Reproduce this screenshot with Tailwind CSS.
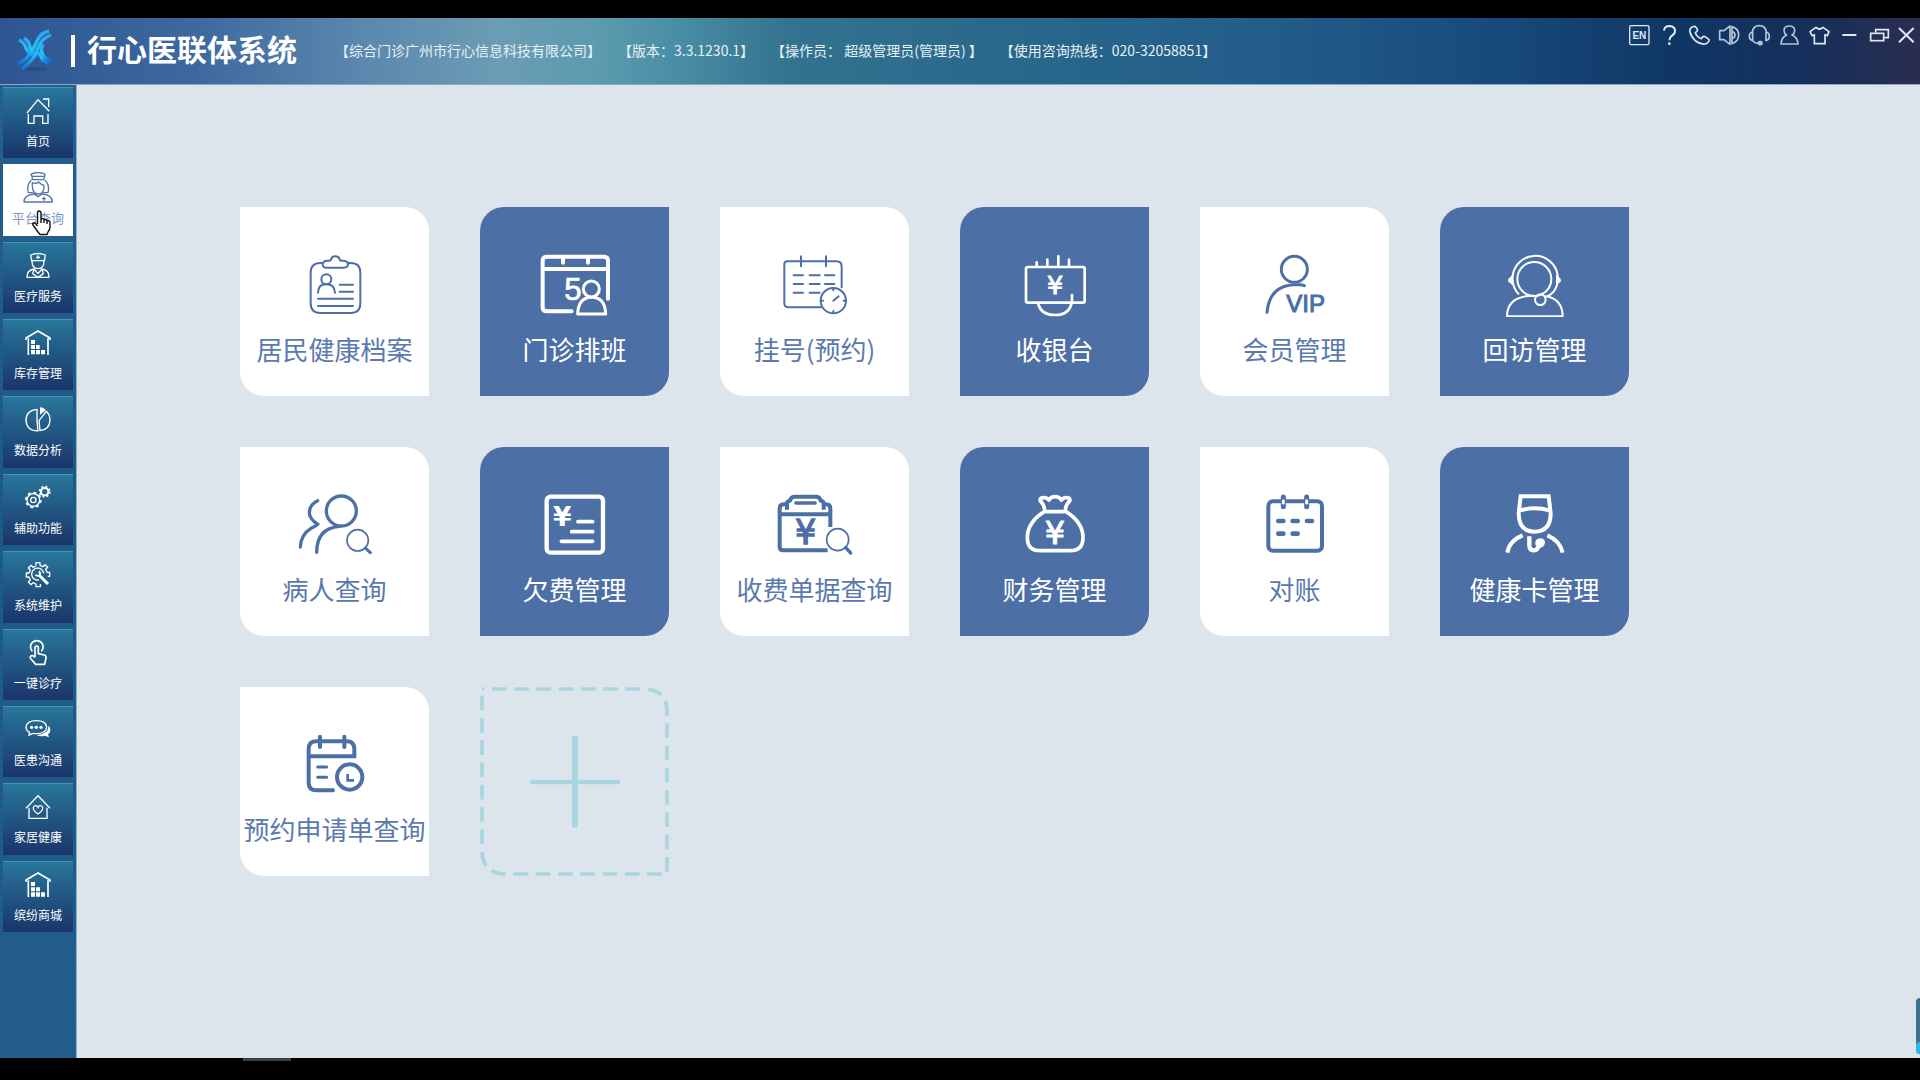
<!DOCTYPE html>
<html lang="zh-CN">
<head>
<meta charset="utf-8">
<meta name="viewport" content="width=device-width, initial-scale=1">
<title>行心医联体系统</title>
<script src="https://cdn.jsdelivr.net/npm/@tailwindcss/browser@4"></script>
</head>
<body class="flex h-screen flex-col overflow-hidden bg-black pt-[18px] font-['Noto_Sans_CJK_SC',sans-serif]">

<header class="flex h-[67px] shrink-0 items-start justify-between border-b border-[#8fa6c4] bg-[linear-gradient(90deg,#2e5591_0%,#3d689f_10%,#5b88ae_19%,#6b9db4_26%,#5c9bb0_31%,#4a8fa5_35%,#33738f_41%,#2a688b_52%,#225d8a_66%,#174a7b_78%,#0f3766_87%,#152f5b_94%,#2a2e50_100%)] text-white">
  <div class="flex h-full items-center">
    <svg class="ml-4 h-11 w-9" viewBox="0 0 36 44" fill="none" aria-hidden="true">
      <defs><linearGradient id="logo" x1="0" y1="0" x2="0" y2="1"><stop offset="0" stop-color="#2fa4ee"/><stop offset=".55" stop-color="#25c3f8"/><stop offset="1" stop-color="#1470d8"/></linearGradient></defs>
      <ellipse cx="20" cy="40" rx="11" ry="2" fill="#1c3f78" fill-opacity=".5"/>
      <g stroke="url(#logo)" stroke-width="3.4" stroke-linejoin="round">
        <path d="M3 11q5 2 7 8 2 6 9 9"/><path d="M8 9q5 3 6 9t8 10"/>
        <path d="M33 2q-8 2-11 8t-6 12q-3 7-14 13"/><path d="M35 6q-8 3-11 9t-5 11q-3 6-13 14"/><path d="M20 22q4 2 6 8 2 4 7 4"/>
        <path d="M27 15q-3 6 0 11t8 6"/>
      </g>
    </svg>
    <span class="ml-[19px] h-8 w-1 bg-white"></span>
    <h1 class="ml-3 pb-1.5 text-[30px] leading-9 font-bold">行心医联体系统</h1>
    <div class="ml-[38px] flex gap-[17px] pb-0.5 text-sm whitespace-pre text-[#e6f1f6]">
      <span>【综合门诊广州市行心信息科技有限公司】</span>
      <span>【版本：3.3.1230.1】</span>
      <span>【操作员： 超级管理员(管理员) 】</span>
      <span>【使用咨询热线：020-32058851】</span>
    </div>
  </div>
  <div class="flex pt-[5px] text-[#dfe9f5]">
    <button class="flex w-[30px] justify-center" aria-label="语言"><svg class="size-6" viewBox="81 69 72 72" fill="none" stroke="currentColor" stroke-width="4"><rect x="89" y="77" width="58" height="57" rx="4"/><text x="118" y="116" text-anchor="middle" font-family="Liberation Sans" font-weight="bold" font-size="30" fill="currentColor" stroke="none">EN</text></svg></button>
    <button class="flex w-[30px] justify-center" aria-label="帮助"><svg class="size-6" viewBox="171 69 72 72" fill="none" stroke="currentColor" stroke-width="6"><path d="M192 92q1-14 17-14 16 1 16 15 0 8-9 14-8 6-8 14"/><circle cx="208" cy="131" r="4" fill="currentColor" stroke="none"/></svg></button>
    <button class="flex w-[30px] justify-center" aria-label="电话"><svg class="size-6" viewBox="261 69 72 72" fill="none" stroke="currentColor" stroke-width="5" stroke-linejoin="round"><path d="M278 80q-10 4-8 16 3 14 17 27 14 11 28 9 8-1 12-9 2-4-3-7l-9-6q-4-2-8 2l-3 4q-14-6-18-18l4-3q4-3 2-7l-5-7q-3-4-9-1z"/></svg></button>
    <button class="flex w-[30px] justify-center opacity-80" aria-label="音量"><svg class="size-6" viewBox="353 69 72 72" fill="none" stroke="currentColor" stroke-width="5" stroke-linejoin="round"><path d="M361 92h13l18-14v55l-18-14h-13zM398 80q20 6 20 25t-20 26zM398 94q9 3 9 11t-9 11"/></svg></button>
    <button class="flex w-[30px] justify-center opacity-80" aria-label="客服"><svg class="size-6" viewBox="443 69 72 72" fill="none" stroke="currentColor" stroke-width="5" stroke-linejoin="round"><path d="M459 96q3-19 21-19t21 19M460 96q-10 2-10 13t10 13zM500 96q10 2 10 13t-10 13zM460 122q5 8 17 8"/><rect x="477" y="125" width="11" height="9" rx="4" fill="currentColor"/></svg></button>
    <button class="flex w-[30px] justify-center opacity-80" aria-label="用户"><svg class="size-6" viewBox="533 69 72 72" fill="none" stroke="currentColor" stroke-width="5" stroke-linejoin="round"><path d="M562 105q-8-5-8-13 0-14 16-14t16 14q0 8-8 13 16 6 18 27h-51q2-21 17-27z"/></svg></button>
    <button class="flex w-[30px] justify-center" aria-label="皮肤"><svg class="size-6" viewBox="623 69 72 72" fill="none" stroke="currentColor" stroke-width="5" stroke-linejoin="round"><path d="M650 82l-18 13 6 12 7-3v27h32v-27l7 3 5-12-18-13q-11 10-21 0z"/></svg></button>
    <button class="flex w-[30px] justify-center" aria-label="最小化"><svg class="size-6" viewBox="713 69 72 72" stroke="currentColor" stroke-width="6"><path d="M729 105h42"/></svg></button>
    <button class="flex w-[30px] justify-center" aria-label="还原"><svg class="size-6" viewBox="801 69 72 72" fill="none" stroke="currentColor" stroke-width="5"><rect x="812" y="100" width="39" height="22"/><path d="M827 98v-9h38v24h-12"/></svg></button>
    <button class="flex w-[26px] justify-center" aria-label="关闭"><svg class="size-6" viewBox="884 69 72 72" stroke="currentColor" stroke-width="6"><path d="M896 84l44 43M940 84l-44 43"/></svg></button>
  </div>
</header>

<div class="flex min-h-0 flex-1">
  <nav class="w-[77px] shrink-0 border-r border-[#8fb0cf] bg-[linear-gradient(180deg,#245f92,#1c5a86_40%,#225d8c)] px-[3px] pt-[2px]">
    <ul class="flex h-[845px] w-[70px] flex-col gap-[6px] text-xs leading-4 text-white">
      <li class="flex-1"><a href="#" class="flex h-full flex-col items-center border-t border-[#4a93b5] bg-linear-to-b from-[#28779b] to-[#1a356a] pt-[7px]">
        <svg class="size-8" viewBox="65 45 96 96" fill="none" stroke="currentColor" stroke-width="4" aria-hidden="true"><path d="M80 99L113 59 147 94M128 57h17v24M84 102v28h17v-22h26v22h16v-28"/></svg>
        <span class="mt-1.5">首页</span></a></li>
      <li class="relative flex-1"><a href="#" aria-current="page" class="flex h-full flex-col items-center bg-white pt-2 text-[#5674ad]">
        <svg class="size-8" viewBox="65 276 96 96" fill="none" stroke="currentColor" stroke-width="4" stroke-linejoin="round" aria-hidden="true"><path d="M95 288l-3-4q2-4 10-5 12-2 22 0 8 1 10 5l-4 15H96zM95 289h37M93 300Q78 314 84 338h14M133 300q16 14 10 38h-14M96 308q-2 34 17 34t18-26q-10-3-16-10-6 7-19 2zM71 366q0-21 30-24l12 8 13-8q30 3 30 24zM131 350v12M125 356h12"/></svg>
        <span class="mt-1.5 text-[13px] leading-4 text-[#7e95c2]">平台查询</span></a>
        <svg class="absolute top-[46px] left-7 h-[26px] w-5" viewBox="0 0 20 26" fill="#fff" stroke="#111" stroke-width="1.4" stroke-linejoin="round" aria-hidden="true"><path d="M6.500 14V3q0-2 1.700-2T10 3v6q3-1 3 1 3-1 3 1 3-1 3 1.500V17q0 3-2 5l-1 2.500H9L7 22l-5-7q-1-2 1-2.300 1.500 0 3.500 3.300M10 9v4M13 10v3M16 11v3"/></svg>
      </li>
      <li class="flex-1"><a href="#" class="flex h-full flex-col items-center border-t border-[#4a93b5] bg-linear-to-b from-[#28779b] to-[#1a356a] pt-[7px]">
        <svg class="size-8" viewBox="65 510 96 96" fill="none" stroke="currentColor" stroke-width="4" stroke-linejoin="round" aria-hidden="true"><path d="M94 542l-3-17q22-9 44 0l-3 17zM113 526v11M107 532h12M95 543q0 23 18 23t18-23M80 592q-1-21 21-25l12 14 12-14q22 4 21 25zM101 568l-4 13 16 11 16-11-4-13"/></svg>
        <span class="mt-1.5">医疗服务</span></a></li>
      <li class="flex-1"><a href="#" class="flex h-full flex-col items-center border-t border-[#4a93b5] bg-linear-to-b from-[#28779b] to-[#1a356a] pt-[7px]">
        <svg class="size-8" viewBox="65 741 96 96" fill="none" stroke="currentColor" stroke-width="5" aria-hidden="true"><path d="M77 780v-6l36-21 36 21v6M84 775v50M143 775v50"/><path d="M92 780h12v12H92zM92 795h12v12H92zM107 795h11v12h-11zM92 810h12v13H92zM107 810h12v13h-12zM122 810h12v13h-12z" fill="currentColor" stroke="none"/></svg>
        <span class="mt-1.5">库存管理</span></a></li>
      <li class="flex-1"><a href="#" class="flex h-full flex-col items-center border-t border-[#4a93b5] bg-linear-to-b from-[#28779b] to-[#1a356a] pt-[7px]">
        <svg class="size-8" viewBox="65 973 96 96" fill="none" stroke="currentColor" stroke-width="4" stroke-linejoin="round" aria-hidden="true"><path d="M110 989q-33 3-33 33 2 32 36 32l-3-30zM138 995l-22 28 3 30q28-2 30-30 0-18-11-28z"/><path d="M119 983q13 1 17 9l-17 13z" fill="currentColor" stroke="none"/></svg>
        <span class="mt-1.5">数据分析</span></a></li>
      <li class="flex-1"><a href="#" class="flex h-full flex-col items-center border-t border-[#4a93b5] bg-linear-to-b from-[#28779b] to-[#1a356a] pt-[7px]">
        <svg class="size-8" viewBox="65 66 96 96" fill="none" stroke="currentColor" aria-hidden="true"><circle cx="99" cy="120" r="19" stroke-width="4"/><circle cx="99" cy="120" r="22" stroke-width="6" stroke-dasharray="8.600 8.600"/><circle cx="99" cy="120" r="8" stroke-width="4"/><circle cx="133" cy="95" r="11" stroke-width="6"/><circle cx="133" cy="95" r="15" stroke-width="6" stroke-dasharray="5.900 5.900"/></svg>
        <span class="mt-1.5">辅助功能</span></a></li>
      <li class="flex-1"><a href="#" class="flex h-full flex-col items-center border-t border-[#4a93b5] bg-linear-to-b from-[#28779b] to-[#1a356a] pt-[7px]">
        <svg class="size-8" viewBox="65 297 96 96" fill="none" stroke="currentColor" stroke-width="4" stroke-linejoin="round" aria-hidden="true"><path d="M107 316v-8h12v8l9 4 6-6 8 8-6 6 4 9h8v12h-6M120 372v8h-13v-8l-9-4-6 6-8-8 6-6-4-9h-8v-12h8l4-9-6-6 8-8 6 6 9-4"/><path d="M116 360a18 18 0 1 1 14-20"/><path d="M116 345l27 27" stroke-width="9"/><path d="M105 345q10 6 14-2 1-6-3-9" stroke-width="6"/></svg>
        <span class="mt-1.5">系统维护</span></a></li>
      <li class="flex-1"><a href="#" class="flex h-full flex-col items-center border-t border-[#4a93b5] bg-linear-to-b from-[#28779b] to-[#1a356a] pt-[7px]">
        <svg class="size-8" viewBox="65 529 96 96" fill="none" stroke="currentColor" stroke-width="5" stroke-linejoin="round" aria-hidden="true"><path d="M96 572a19 19 0 1 1 27 0M104 590v-28q0-6 5-6t5 6v17l18 4q6 2 5 9l-4 19h-27l-14-16q-5-6 0-9t12 4"/></svg>
        <span class="mt-1.5">一键诊疗</span></a></li>
      <li class="flex-1"><a href="#" class="flex h-full flex-col items-center border-t border-[#4a93b5] bg-linear-to-b from-[#28779b] to-[#1a356a] pt-[7px]">
        <svg class="size-8" viewBox="65 762 96 96" fill="none" stroke="currentColor" stroke-width="4" aria-hidden="true"><path d="M88 818q-11-6-11-17 2-19 31-19t31 19q-2 20-31 20-6 0-10-1l-12 5z"/><path d="M145 797q12 15-2 26l3 9-13-5q-14 4-24-2 34-2 36-28z" fill="currentColor" stroke="none"/><g fill="currentColor" stroke="none"><circle cx="94" cy="802" r="5"/><circle cx="108" cy="802" r="5"/><circle cx="122" cy="802" r="5"/></g></svg>
        <span class="mt-1.5">医患沟通</span></a></li>
      <li class="flex-1"><a href="#" class="flex h-full flex-col items-center border-t border-[#4a93b5] bg-linear-to-b from-[#28779b] to-[#1a356a] pt-[7px]">
        <svg class="size-8" viewBox="65 992 96 96" fill="none" stroke="currentColor" stroke-width="4" aria-hidden="true"><path d="M77 1044l36-38 36 38M86 1042v32h54v-32M113 1061q-15-9-14-19 1-6 7-6 5 0 7 5 2-5 7-5 6 0 7 6 1 10-14 19z"/></svg>
        <span class="mt-1.5">家居健康</span></a></li>
      <li class="flex-1"><a href="#" class="flex h-full flex-col items-center border-t border-[#4a93b5] bg-linear-to-b from-[#28779b] to-[#1a356a] pt-[7px]">
        <svg class="size-8" viewBox="65 1224 96 96" fill="none" stroke="currentColor" stroke-width="5" aria-hidden="true"><path d="M77 1262v-5l36-21 36 21v5M84 1258v50M143 1258v50"/><path d="M92 1263h12v12H92zM92 1279h12v12H92zM107 1279h12v12h-12zM92 1294h12v13H92zM107 1294h12v13h-12zM122 1294h12v13h-12z" fill="currentColor" stroke="none"/></svg>
        <span class="mt-1.5">缤纷商城</span></a></li>
    </ul>
  </nav>

  <main class="relative flex-1 bg-[#dce4ec] pt-[122px] pl-[163px]">
    <div class="grid grid-cols-[repeat(6,189px)] gap-[51px] text-[26px] leading-9 whitespace-nowrap text-[#4c6fa5]">

      <button class="flex h-[189px] flex-col items-center rounded-tr-[24px] rounded-bl-[24px] bg-white pt-[46px]">
        <svg class="h-16 w-20 shrink-0" viewBox="224 190 240 192" fill="none" stroke="currentColor" stroke-width="6" stroke-linecap="round" aria-hidden="true"><path d="M306 220h-6q-29 0-29 29v92q0 29 29 29h91q29 0 29-29v-92q0-29-29-29h-6M320 234h50q13 0 13-10t-14-11h-5q-6 0-7-6-2-7-12-7t-12 7q-1 6-7 6h-5q-13 0-14 11t13 10zM293 309q0-25 25-25t26 25M358 285h40M358 306h40M293 327h105M293 349h105"/><circle cx="318" cy="269" r="15"/></svg>
        <span class="mt-3.5 text-[#5b79ae]">居民健康档案</span></button>

      <button class="flex h-[189px] flex-col items-center rounded-tl-[24px] rounded-br-[24px] bg-[#4c6fa5] pt-[46px] text-white">
        <svg class="h-16 w-20 shrink-0" viewBox="944 190 240 192" fill="none" stroke="currentColor" stroke-width="12" stroke-linecap="round" aria-hidden="true"><path d="M1163 327V213q0-12-12-12H979q-12 0-12 12v140q0 12 12 12h75M967 238h196M1028 206v13M1103 206v13"/><text x="1032" y="331" font-family="Liberation Sans" font-size="94" fill="currentColor" stroke="currentColor" stroke-width="2">5</text><g stroke-width="9" stroke-linejoin="round"><circle cx="1113" cy="298" r="24" fill="#4c6fa5"/><path d="M1072 373q2-50 42-50t42 50z" fill="#4c6fa5"/></g></svg>
        <span class="mt-3.5">门诊排班</span></button>

      <button class="flex h-[189px] flex-col items-center rounded-tr-[24px] rounded-bl-[24px] bg-white pt-[46px]">
        <svg class="h-16 w-20 shrink-0" viewBox="224 190 240 192" fill="none" stroke="currentColor" stroke-width="6" stroke-linecap="round" aria-hidden="true"><path d="M362 353h-98q-12 0-12-12V224q0-9 9-9h147q16 0 16 16v62M302 200v30M377 200v30M280 257h28M328 257h30M374 257h28M280 283h28M328 283h30M374 283h28M280 309h28M328 309h30M399 333l16-13M399 296v6M399 364v6M362 333h6M430 333h6"/><circle cx="399" cy="333" r="38"/></svg>
        <span class="mt-3.5 text-[#5b79ae]">挂号(预约)</span></button>

      <button class="flex h-[189px] flex-col items-center rounded-tl-[24px] rounded-br-[24px] bg-[#4c6fa5] pt-[46px] text-white">
        <svg class="h-16 w-20 shrink-0" viewBox="944 190 240 192" fill="none" stroke="currentColor" stroke-width="8" stroke-linecap="round" aria-hidden="true"><rect x="977" y="232" width="176" height="107" rx="5"/><path d="M1009 218v10M1041 210v18M1074 200v28M1106 210v18M1014 344q9 32 50 32 47 0 51-44v-16"/><text x="1064" y="313" text-anchor="middle" font-family="DejaVu Sans" font-size="76" fill="currentColor" stroke="currentColor" stroke-width="3">¥</text></svg>
        <span class="mt-3.5">收银台</span></button>

      <button class="flex h-[189px] flex-col items-center rounded-tr-[24px] rounded-bl-[24px] bg-white pt-[46px]">
        <svg class="h-16 w-20 shrink-0" viewBox="224 190 240 192" fill="none" stroke="currentColor" stroke-width="9" stroke-linecap="round" aria-hidden="true"><circle cx="342" cy="239" r="39"/><path d="M260 368q8-82 84-83h12q10 0 16 3"/><text x="318" y="367" font-family="Liberation Sans" font-size="72" fill="currentColor" stroke="currentColor" stroke-width="3">VIP</text></svg>
        <span class="mt-3.5 text-[#5b79ae]">会员管理</span></button>

      <button class="flex h-[189px] flex-col items-center rounded-tl-[24px] rounded-br-[24px] bg-[#4c6fa5] pt-[46px] text-white">
        <svg class="h-16 w-20 shrink-0" viewBox="944 190 240 192" fill="none" stroke="currentColor" stroke-width="6" aria-hidden="true"><circle cx="1062" cy="268" r="51"/><path d="M1016 314a68 68 0 1 1 104-8q-9 11-24 16M1062 318q-82 0-82 62h167q0-52-52-61"/><circle cx="1080" cy="330" r="16"/><path d="M998 256q-7 0-7 6-8 3-8 10t8 9q0 5 7 5zM1127 256q7 0 7 6 8 3 8 10t-8 9q0 5-7 5z" fill="currentColor" stroke="none"/></svg>
        <span class="mt-3.5">回访管理</span></button>

      <button class="flex h-[189px] flex-col items-center rounded-tr-[24px] rounded-bl-[24px] bg-white pt-[46px]">
        <svg class="h-16 w-20 shrink-0" viewBox="224 190 240 192" fill="none" stroke="currentColor" stroke-width="10" stroke-linecap="round" aria-hidden="true"><circle cx="363" cy="244" r="45"/><path d="M289 368q0-72 68-78M292 213q-25 12-25 37 0 17 25 34-4 5-20 12-30 18-32 56"/><circle cx="412" cy="332" r="32" stroke-width="5"/><path d="M435 355l15 14" stroke-width="9"/></svg>
        <span class="mt-3.5 text-[#5b79ae]">病人查询</span></button>

      <button class="flex h-[189px] flex-col items-center rounded-tl-[24px] rounded-br-[24px] bg-[#4c6fa5] pt-[46px] text-white">
        <svg class="h-16 w-20 shrink-0" viewBox="944 190 240 192" fill="none" stroke="currentColor" stroke-width="13" stroke-linecap="round" aria-hidden="true"><rect x="979" y="201" width="169" height="168" rx="12"/><path d="M1073 276h44M1054 306h63M1023 335h94" stroke-width="11"/><text x="1026" y="289" text-anchor="middle" font-family="DejaVu Sans" font-weight="bold" font-size="80" fill="currentColor" stroke="none">¥</text></svg>
        <span class="mt-3.5">欠费管理</span></button>

      <button class="flex h-[189px] flex-col items-center rounded-tr-[24px] rounded-bl-[24px] bg-white pt-[46px]">
        <svg class="h-16 w-20 shrink-0" viewBox="224 190 240 192" fill="none" stroke="currentColor" stroke-width="12" aria-hidden="true"><path d="M382 362H249q-11 0-11-11V237q0-13 13-13h8M238 254h152M390 292v-55q0-13-13-13h-8M260 240v-18q0-8 9-9 2-12 15-12h62q13 0 15 12 9 1 9 9v18" stroke-linejoin="round"/><path d="M287 220h57" stroke-width="11" stroke-linecap="round"/><text x="316" y="343" text-anchor="middle" font-family="DejaVu Sans" font-size="100" fill="currentColor" stroke="currentColor" stroke-width="4">¥</text><circle cx="412" cy="330" r="33" stroke-width="5" fill="#fff"/><path d="M436 354l15 16" stroke-width="10" stroke-linecap="round"/></svg>
        <span class="mt-3.5 text-[#5b79ae]">收费单据查询</span></button>

      <button class="flex h-[189px] flex-col items-center rounded-tl-[24px] rounded-br-[24px] bg-[#4c6fa5] pt-[46px] text-white">
        <svg class="h-16 w-20 shrink-0" viewBox="944 190 240 192" fill="none" stroke="currentColor" stroke-width="11" stroke-linejoin="round" aria-hidden="true"><path d="M1033 240q-2-16-14-28 0-9 13-8 8 0 14 7 6-10 18-10 13 0 19 10 6-7 13-7 13-1 13 8-12 12-14 28M1032 246h65q51 32 51 78 0 39-39 39h-89q-39 0-39-39 0-46 51-78z"/><text x="1064" y="342" text-anchor="middle" font-family="DejaVu Sans" font-size="96" fill="currentColor" stroke="currentColor" stroke-width="3">¥</text></svg>
        <span class="mt-3.5">财务管理</span></button>

      <button class="flex h-[189px] flex-col items-center rounded-tr-[24px] rounded-bl-[24px] bg-white pt-[46px]">
        <svg class="h-16 w-20 shrink-0" viewBox="224 190 240 192" fill="none" stroke="currentColor" stroke-width="12" stroke-linecap="round" aria-hidden="true"><rect x="264" y="215" width="161" height="148" rx="14"/><path d="M309 202v29M379 202v29" stroke-width="15"/><path d="M309 213v7M379 213v7" stroke="#fff" stroke-width="9"/><path d="M294 274h15M337 274h15M380 274h15M294 312h15M337 312h15" stroke-width="14"/></svg>
        <span class="mt-3.5 text-[#5b79ae]">对账</span></button>

      <button class="flex h-[189px] flex-col items-center rounded-tl-[24px] rounded-br-[24px] bg-[#4c6fa5] pt-[46px] text-white">
        <svg class="h-16 w-20 shrink-0" viewBox="944 190 240 192" fill="none" stroke="currentColor" stroke-width="12" aria-hidden="true"><path d="M1021 200h84l6 50q0 56-48 56t-48-56zM1017 243q46-14 92 0M981 369q6-36 46-52M1147 369q-8-36-46-52"/><path d="M1047 320v26q0 16 13 16t15-16" stroke-width="13"/><path d="M1065 345q-2-17 12-19 16-1 17 12-2 16-16 17z" fill="currentColor" stroke="none"/></svg>
        <span class="mt-3.5">健康卡管理</span></button>

      <button class="flex h-[189px] flex-col items-center rounded-tr-[24px] rounded-bl-[24px] bg-white pt-[46px]">
        <svg class="h-16 w-20 shrink-0" viewBox="224 190 240 192" fill="none" stroke="currentColor" stroke-width="12" stroke-linecap="round" aria-hidden="true"><path d="M338 362h-50q-23 0-23-23V238q0-23 23-23h91q23 0 23 23v22H265M299 201v31M372 201v31"/><path d="M292 292h27M292 323h27" stroke-width="9"/><circle cx="388" cy="322" r="38"/><path d="M382 313v19h19" stroke-width="8" stroke-linecap="butt"/></svg>
        <span class="mt-3.5 text-[#5b79ae]">预约申请单查询</span></button>

      <button class="h-[189px] text-[#a9d5e1]" aria-label="添加">
        <svg class="size-full" viewBox="780 49 567 567" fill="none" stroke="currentColor" stroke-width="11" aria-hidden="true"><path d="M786 55h485q70 0 70 70v485H858q-72 0-72-72z" stroke-dasharray="44 22.800" stroke-dashoffset="37"/><path d="M1065 204v258" stroke-width="18" stroke-linecap="round"/><path d="M936 334h258" stroke-width="14" stroke-linecap="round"/></svg>
      </button>
    </div>
    <div class="absolute right-0 bottom-1 flex h-14 w-1 flex-col justify-end rounded-l-md bg-[#3f6f8f]"><span class="h-3 rounded-l-md bg-[#35b5e5]"></span></div>
  </main>
</div>
<footer class="flex h-[22px] shrink-0 bg-black pl-[243px]"><span class="h-[3px] w-12 bg-[#3a3f44]"></span></footer>
</body>
</html>
